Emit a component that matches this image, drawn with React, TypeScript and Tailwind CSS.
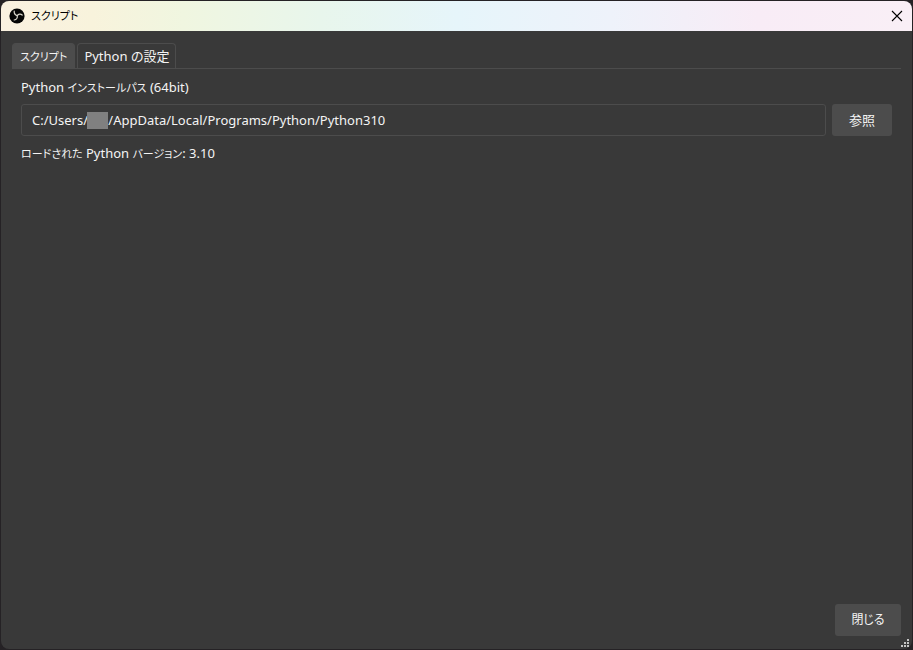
import { useState } from 'react';

const TABS = [
  { id: 'scripts', label: <span className="text-[11px]">スクリプト</span> },
  { id: 'python', label: 'Python の設定' },
];

const INSTALL_PATH = 'C:/Users/\u00a0\u00a0\u00a0\u00a0\u00a0\u00a0/AppData/Local/Programs/Python/Python310';

function ObsLogo() {
  return (
    <svg className="h-4 w-4" viewBox="0 0 16 16" fill="none" aria-hidden="true">
      <circle cx="8" cy="8" r="7.6" fill="#050505" />
      <g stroke="#d8d5ca" strokeWidth="1.2" strokeLinecap="round">
        <path d="M8.2 7.6C6.4 7 5 5.5 5.2 3.2" />
        <path d="M8.2 7.6C9.4 5.9 11.6 5.4 13.2 7" />
        <path d="M8.2 7.6C8.8 9.8 7.6 11.6 5.2 12" />
      </g>
    </svg>
  );
}

function TitleBar({ title }: { title: string }) {
  return (
    <header className="flex h-[30px] flex-shrink-0 items-center justify-between bg-[linear-gradient(90deg,#faf1e0_0%,#f8f3dc_10%,#f0f6e0_20%,#e8f6ec_35%,#e6f5fa_50%,#eef2fa_67%,#f8ecf6_83%,#f9eff6_100%)] pr-[7px] pl-2 text-black">
      <div className="flex items-center gap-1.5">
        <ObsLogo />
        <h1 className="text-[11px] leading-4">{title}</h1>
      </div>
      <button type="button" aria-label="閉じる" className="flex h-4 w-4 items-center justify-center">
        <svg className="h-3 w-3" viewBox="0 0 12 12" fill="none" stroke="currentColor" strokeWidth="1.1">
          <path d="M1 1l10 10M11 1L1 11" />
        </svg>
      </button>
    </header>
  );
}

function SizeGrip() {
  const dots = [[6, 0], [3, 3], [6, 3], [0, 6], [3, 6], [6, 6]];
  return (
    <svg className="absolute right-[3px] bottom-0.5 h-2 w-2" viewBox="0 0 8 8" fill="#c4c4c4" aria-hidden="true">
      {dots.map(([x, y]) => (
        <rect key={`${x}-${y}`} x={x} y={y} width="2" height="2" />
      ))}
    </svg>
  );
}

export default function App() {
  const [activeTab, setActiveTab] = useState('scripts');
  const [path, setPath] = useState(INSTALL_PATH);

  return (
    <div className="flex min-h-screen bg-[#252225] px-px pt-px pb-px font-['Noto_Sans','Noto_Sans_CJK_JP',sans-serif] text-[13px] leading-5 text-[#f4f4f4] [font-feature-settings:'palt']">
      <div className="relative flex flex-1 flex-col overflow-hidden rounded-lg bg-[#393939]">
        <TitleBar title="スクリプト" />

        <main className="flex flex-1 flex-col px-[11px] pt-3 pb-[13px]">
          {/* Tabs */}
          <div role="tablist" className="flex gap-0.5 border-b border-[#4c4c4c]">
            {TABS.map(tab => (
              <button
                key={tab.id}
                type="button"
                role="tab"
                aria-selected={activeTab === tab.id}
                onClick={() => setActiveTab(tab.id)}
                className={`h-[25px] rounded-t border border-b-0 border-[#4c4c4c] whitespace-nowrap ${
                  activeTab === tab.id ? 'bg-[#4c4c4c] px-[7px]' : 'px-1.5'
                }`}
              >
                {tab.label}
              </button>
            ))}
          </div>

          {/* Python settings */}
          <section className="flex flex-col px-[9px] pt-2">
            <label htmlFor="python-path">
              Python <span className="text-[11px]">インストールパス</span> (64bit)
            </label>
            <div className="mt-1.5 flex gap-1.5">
              <div className="relative flex-1">
                <input
                  id="python-path"
                  type="text"
                  value={path}
                  onChange={e => setPath(e.target.value)}
                  className="block h-8 w-full rounded-[3px] border border-[#4c4c4c] px-2.5 outline-none"
                />
                <span className="absolute top-2 left-[66px] h-[17px] w-[21px] bg-[#808080]" />
              </div>
              <button type="button" className="h-8 w-[60px] rounded-[3px] bg-[#4c4c4c]">
                参照
              </button>
            </div>
            <p className="mt-[7px]">
              <span className="text-[11px]">ロードされた</span> Python <span className="text-[11px]">バージョン</span>: 3.10
            </p>
          </section>

          <footer className="mt-auto flex justify-end">
            <button type="button" className="h-8 w-[66px] rounded-[3px] bg-[#4c4c4c] text-xs">
              閉じる
            </button>
          </footer>
        </main>

        <SizeGrip />
      </div>
    </div>
  );
}
